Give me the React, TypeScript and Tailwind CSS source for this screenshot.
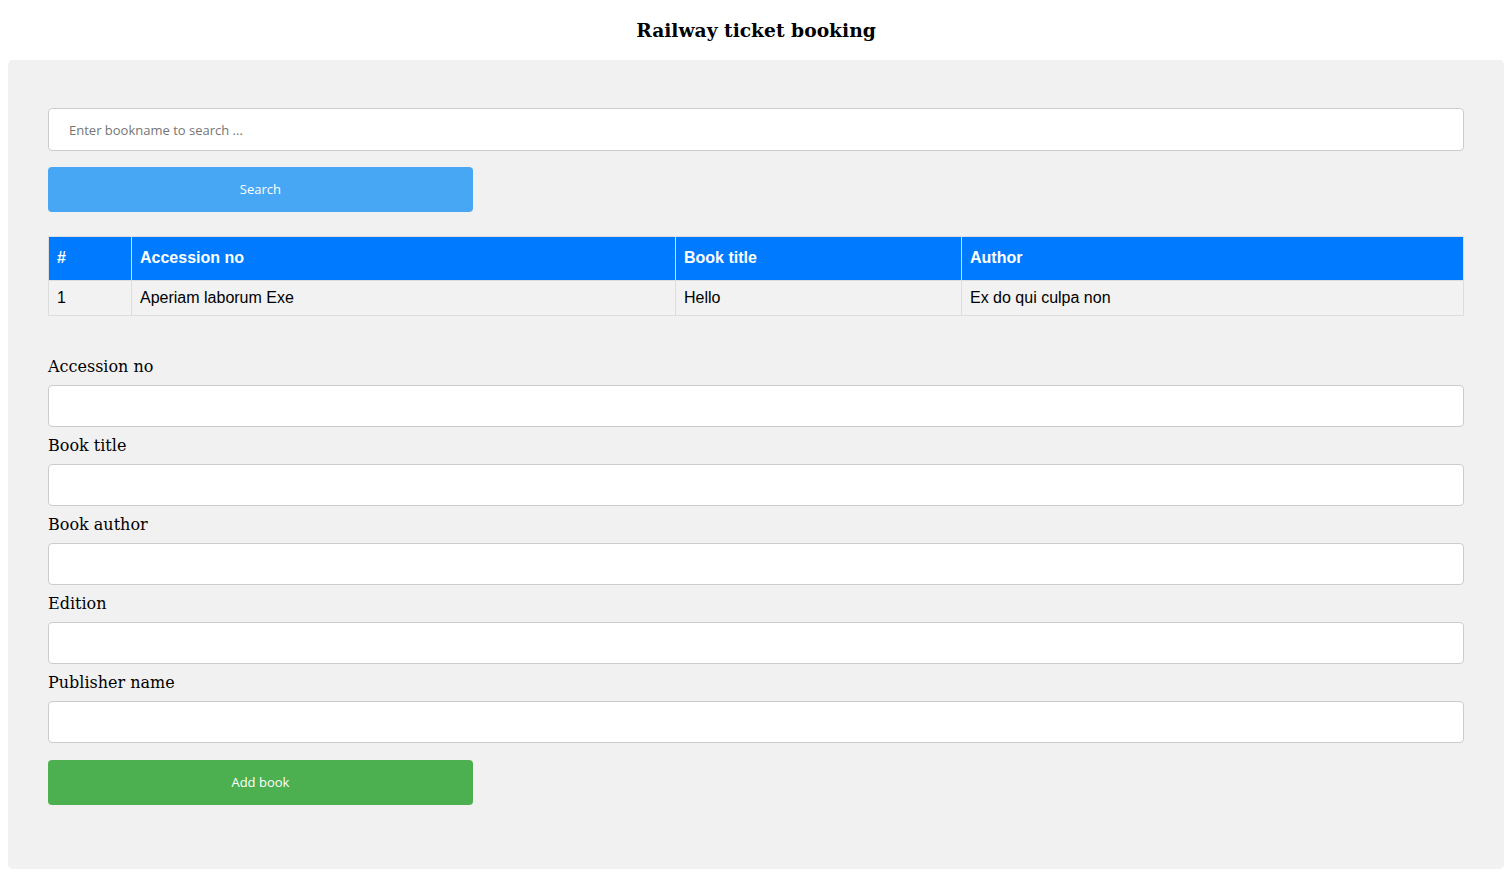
const rows = [
  { id: 1, accession: 'Aperiam laborum Exe', title: 'Hello', author: 'Ex do qui culpa non' },
]

const fields = ['Accession no', 'Book title', 'Book author', 'Edition', 'Publisher name']

export default function App() {
  return (
    <div className="min-h-screen bg-white px-2 pb-2 font-['DejaVu_Serif',serif] text-black">
      <h1 className="h-[60px] pt-[19px] text-center text-[18.7px] font-bold leading-[22px]">
        Railway ticket booking
      </h1>

      <div className="rounded-[5px] bg-[#f1f1f1] px-10 pb-[64px] pt-12">
        <input
          type="text"
          placeholder="Enter bookname to search ..."
          className="block h-[43px] w-full rounded-[4px] border border-[#cccccc] bg-white px-5 font-['Open_Sans',sans-serif] text-[13px] text-black placeholder:text-[#757575] focus:outline-none"
        />
        <button className="mt-[16px] block h-[45px] w-[30%] rounded-[4px] bg-[#47a7f5] font-['Open_Sans',sans-serif] text-[13px] text-white">
          Search
        </button>

        <table className="mt-[24px] w-full table-fixed border-collapse font-['Liberation_Sans',Arial,sans-serif] text-[16px] leading-[18px]">
          <thead>
            <tr className="bg-[#007bff] text-left text-white">
              <th className="w-[83px] border border-[#dddddd] px-2 pb-[13px] pt-[12px] font-bold">#</th>
              <th className="w-[544px] border border-[#dddddd] px-2 pb-[13px] pt-[12px] font-bold">Accession no</th>
              <th className="w-[286px] border border-[#dddddd] px-2 pb-[13px] pt-[12px] font-bold">Book title</th>
              <th className="border border-[#dddddd] px-2 pb-[13px] pt-[12px] font-bold">Author</th>
            </tr>
          </thead>
          <tbody>
            {rows.map((row) => (
              <tr key={row.id} className="bg-[#f2f2f2]">
                <td className="border border-[#dddddd] px-2 py-2">{row.id}</td>
                <td className="border border-[#dddddd] px-2 py-2">{row.accession}</td>
                <td className="border border-[#dddddd] px-2 py-2">{row.title}</td>
                <td className="border border-[#dddddd] px-2 py-2">{row.author}</td>
              </tr>
            ))}
          </tbody>
        </table>

        <form className="mt-[41px]" onSubmit={(e) => e.preventDefault()}>
          {fields.map((label) => (
            <div key={label}>
              <label className="block h-[19px] text-[16px] leading-[19px]">{label}</label>
              <input
                type="text"
                className="my-[9px] block h-[42px] w-full rounded-[4px] border border-[#cccccc] bg-white px-5 focus:outline-none"
              />
            </div>
          ))}
          <button
            type="submit"
            className="mt-[17px] block h-[45px] w-[30%] rounded-[4px] bg-[#4caf50] font-['Open_Sans',sans-serif] text-[13px] text-white"
          >
            Add book
          </button>
        </form>
      </div>
    </div>
  )
}
